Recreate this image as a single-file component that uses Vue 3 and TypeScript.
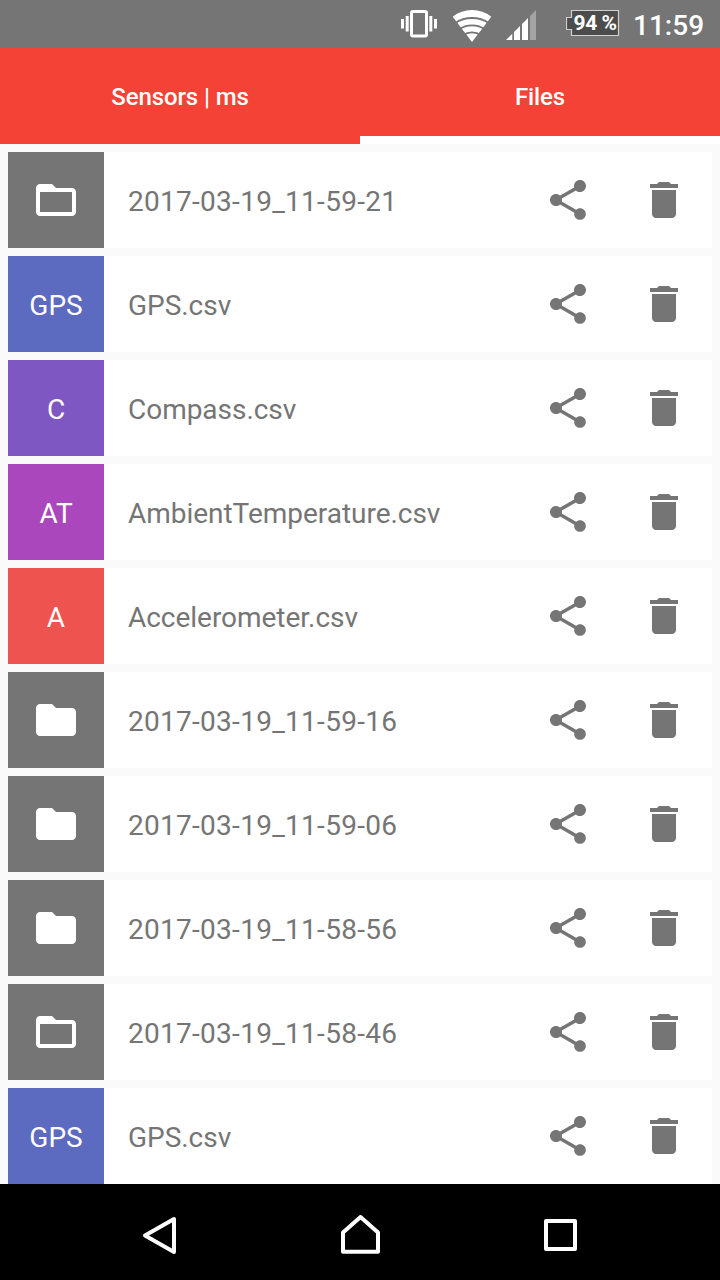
<script setup lang="ts">
interface FileEntry {
  name: string
  kind: 'open' | 'closed' | 'file'
  label?: string
  color: string
}

const grey = '#757575'
const files: FileEntry[] = [
  { name: '2017-03-19_11-59-21', kind: 'open', color: grey },
  { name: 'GPS.csv', kind: 'file', label: 'GPS', color: '#5c6bc0' },
  { name: 'Compass.csv', kind: 'file', label: 'C', color: '#7e57c2' },
  { name: 'AmbientTemperature.csv', kind: 'file', label: 'AT', color: '#ab47bc' },
  { name: 'Accelerometer.csv', kind: 'file', label: 'A', color: '#ef5350' },
  { name: '2017-03-19_11-59-16', kind: 'closed', color: grey },
  { name: '2017-03-19_11-59-06', kind: 'closed', color: grey },
  { name: '2017-03-19_11-58-56', kind: 'closed', color: grey },
  { name: '2017-03-19_11-58-46', kind: 'open', color: grey },
  { name: 'GPS.csv', kind: 'file', label: 'GPS', color: '#5c6bc0' },
]
</script>

<template>
  <div class="screen">
    <header class="status">
      <svg class="vibrate" width="36" height="28" viewBox="0 0 36 28" fill="#fff">
        <rect x="0" y="9" width="3" height="9.5" />
        <rect x="4.7" y="6" width="3" height="15.5" />
        <rect x="10.5" y="1.5" width="15" height="24.5" rx="1.5" fill="none" stroke="#fff" stroke-width="3" />
        <rect x="28.3" y="6" width="3" height="15.5" />
        <rect x="33" y="9" width="3" height="9.5" />
      </svg>
      <svg class="wifi" width="40" height="32" viewBox="0 0 40 32">
        <path d="M20 32 0.7 6.7Q9 0 20 0t19.3 6.7Z" fill="#fff" />
        <g fill="none" stroke="#757575" stroke-width="1.8">
          <path d="M3 13.200Q10.500 8 20 8t17 5.200" />
          <path d="M7 19.400Q12.500 15.300 20 15.300t13 4.100" />
          <path d="M11 25.200Q15 22.400 20 22.400t9 2.800" />
        </g>
      </svg>
      <svg class="signal" width="30" height="30" viewBox="0 0 30 30">
        <path d="M30 0V30H24V6Z" fill="#a3a3a3" />
        <path d="M0 30 6.3 23.7V30ZM8 22 14 16V30H8ZM16 14 22 8V30H16Z" fill="#fff" />
      </svg>
      <div class="battery">
        <svg width="54" height="28" viewBox="0 0 54 28">
          <path d="M5.5 1.5H52.5V26.5H5.5V20.5H.5V8.5H5.5Z" fill="#4c4c4c" stroke="#d0d0d0" stroke-width="1.2" />
        </svg>
        <span>94 %</span>
      </div>
      <time>11:59</time>
    </header>

    <nav class="tabs">
      <div class="tab">Sensors | ms</div>
      <div class="tab active">Files</div>
    </nav>

    <main class="list">
      <div v-for="(file, i) in files" :key="i" class="row">
        <div class="tile" :style="{ backgroundColor: file.color }">
          <span v-if="file.kind === 'file'">{{ file.label }}</span>
          <svg v-else width="48" height="48" viewBox="0 0 24 24" fill="#fff">
            <path v-if="file.kind === 'open'" d="M20 6h-8l-2-2H4c-1.1 0-1.99.9-1.99 2L2 18c0 1.100.9 2 2 2h16c1.100 0 2-.9 2-2V8c0-1.100-.9-2-2-2zm0 12H4V8h16v10z" />
            <path v-else d="M10 4H4c-1.100 0-1.990.9-1.990 2L2 18c0 1.100.9 2 2 2h16c1.100 0 2-.9 2-2V8c0-1.100-.9-2-2-2h-8l-2-2z" />
          </svg>
        </div>
        <span class="name" :class="{ dated: file.kind !== 'file' }">{{ file.name }}</span>
        <svg class="share" width="48" height="48" viewBox="0 0 24 24" fill="#757575">
          <path d="M18 16.080c-.76 0-1.440.3-1.960.77L8.910 12.700c.05-.23.09-.46.09-.7s-.04-.47-.09-.7l7.050-4.110c.54.5 1.250.81 2.040.81 1.660 0 3-1.340 3-3s-1.340-3-3-3-3 1.340-3 3c0 .24.04.47.09.7L8.040 9.810C7.500 9.310 6.790 9 6 9c-1.660 0-3 1.340-3 3s1.340 3 3 3c.79 0 1.500-.31 2.040-.81l7.120 4.160c-.05.21-.08.43-.08.65 0 1.610 1.310 2.920 2.920 2.920 1.610 0 2.920-1.310 2.920-2.920s-1.310-2.920-2.920-2.920z" />
        </svg>
        <svg width="48" height="48" viewBox="0 0 24 24" fill="#757575">
          <path d="M6 19c0 1.100.9 2 2 2h8c1.100 0 2-.9 2-2V7H6v12zM19 4h-3.500l-1-1h-5l-1 1H5v2h14V4z" />
        </svg>
      </div>
    </main>

    <footer class="navbar">
      <svg width="40" height="40" viewBox="0 0 40 40">
        <path d="M5 20.500 34 4V37Z" />
      </svg>
      <svg width="40" height="40" viewBox="0 0 40 40">
        <path d="M3 17.500 20.500 2 38 17.500V36.800H3Z" />
      </svg>
      <svg width="40" height="40" viewBox="0 0 40 40">
        <path d="M6 6H35V34H6Z" />
      </svg>
    </footer>
  </div>
</template>

<style>
body {
  margin: 0;
  overflow: hidden;
}
</style>

<style scoped>
.screen {
  width: 720px;
  height: 1280px;
  display: flex;
  flex-direction: column;
  overflow: hidden;
  background: #fafafa;
  font-family: Roboto, sans-serif;
}
svg {
  display: block;
  flex: none;
}
.status {
  height: 48px;
  flex: none;
  box-sizing: border-box;
  padding: 10px 0 0 401px;
  display: flex;
  align-items: flex-start;
  background: #757575;
  color: #fff;
}
.wifi {
  margin-left: 15px;
}
.signal {
  margin-left: 14px;
}
.battery {
  position: relative;
  margin: -1px 0 0 30px;
  width: 54px;
  height: 28px;
}
.battery span {
  position: absolute;
  inset: 0 3px 0 7px;
  line-height: 29px;
  font-size: 21px;
  font-weight: 700;
  letter-spacing: -0.5px;
  text-align: center;
  white-space: nowrap;
}
time {
  margin-left: 13px;
  line-height: 32px;
  font-size: 28px;
  font-weight: 500;
}
.tabs {
  height: 96px;
  flex: none;
  display: grid;
  grid-template-columns: 1fr 1fr;
  background: #f44336;
}
.tab {
  box-sizing: border-box;
  border-bottom: 8px solid transparent;
  padding-top: 10px;
  line-height: 78px;
  text-align: center;
  color: #fff;
  font-size: 24px;
  font-weight: 500;
  letter-spacing: -0.1px;
}
.active {
  border-bottom-color: #fff;
}
.list {
  height: 1040px;
  flex: none;
  box-sizing: border-box;
  padding: 8px 8px 0;
  display: flex;
  flex-direction: column;
  gap: 8px;
}
.row {
  height: 96px;
  flex: none;
  box-sizing: border-box;
  padding-right: 24px;
  display: flex;
  align-items: center;
  background: #fff;
}
.tile {
  width: 96px;
  height: 96px;
  display: flex;
  align-items: center;
  justify-content: center;
  color: #fff;
  font-size: 28px;
}
.tile span,
.name {
  line-height: 32px;
  padding-top: 4px;
}
.name {
  flex: 1;
  margin-left: 24px;
  color: #757575;
  font-size: 28px;
  letter-spacing: -0.03px;
  white-space: nowrap;
}
.dated {
  letter-spacing: 0.28px;
}
.share {
  margin-right: 48px;
}
.navbar {
  height: 96px;
  flex: none;
  box-sizing: border-box;
  padding: 31px 140px 0;
  display: flex;
  justify-content: space-between;
  background: #000;
}
.navbar path {
  fill: none;
  stroke: #fff;
  stroke-width: 4;
  stroke-linejoin: round;
}
</style>
